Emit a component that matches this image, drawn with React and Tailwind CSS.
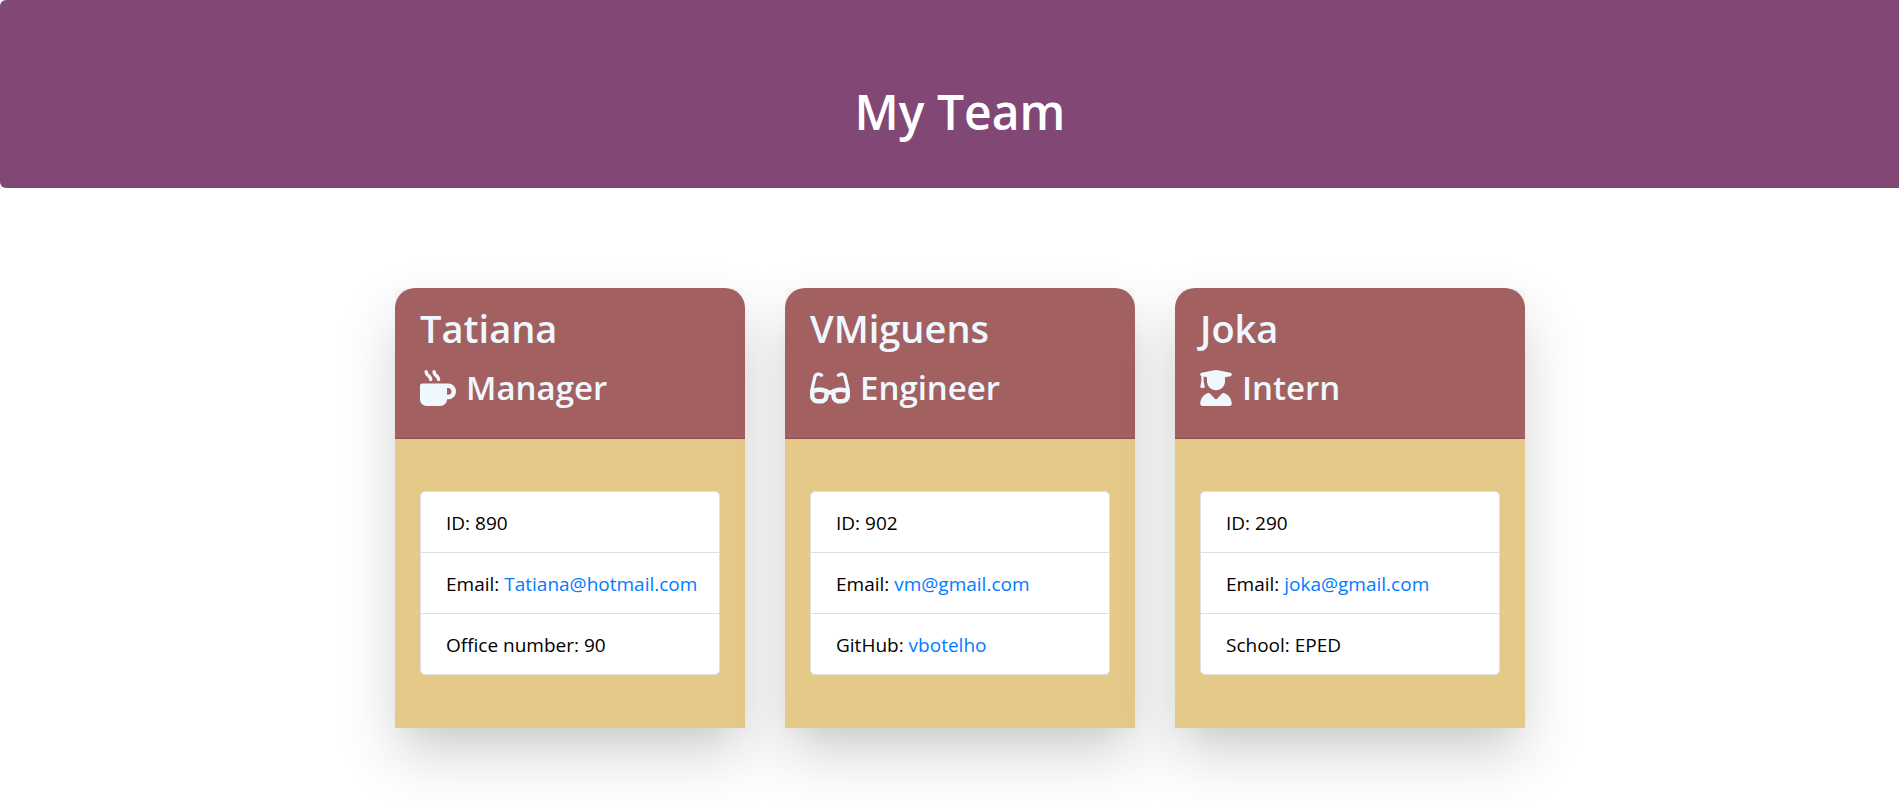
import { FaMugHot, FaGlasses, FaUserGraduate } from "react-icons/fa6";

const team = [
  {
    name: "Tatiana",
    role: "Manager",
    Icon: FaMugHot,
    iconSize: "w-[36px]",
    id: "890",
    email: "Tatiana@hotmail.com",
    label: "Office number",
    value: "90",
  },
  {
    name: "VMiguens",
    role: "Engineer",
    Icon: FaGlasses,
    iconSize: "w-[40px]",
    id: "902",
    email: "vm@gmail.com",
    label: "GitHub",
    value: "vbotelho",
    href: "https://github.com/vbotelho",
  },
  {
    name: "Joka",
    role: "Intern",
    Icon: FaUserGraduate,
    iconSize: "w-[32px]",
    id: "290",
    email: "joka@gmail.com",
    label: "School",
    value: "EPED",
  },
];

function Row({ label, children }) {
  return (
    <li className="pt-[16px] pr-[15px] pb-[14px] pl-[25px] leading-[30px]">
      {label}: {children}
    </li>
  );
}

function Card({ member }) {
  const { name, role, Icon, iconSize, id, email, label, value, href } = member;
  return (
    <article className="w-[350px] rounded-t-[5px] bg-[#f5f5f5] shadow-[0_28px_60px_rgba(0,0,0,0.16),0_20px_32px_-18px_rgba(0,0,0,0.09)]">
      <header className="rounded-t-[20px] border-b border-[#8f5254] bg-[#a36061] px-[25px] pt-[16px] pb-[29px] text-[#f0f8ff]">
        <h2 className="mb-[15px] text-[38px] leading-[48px] font-semibold">{name}</h2>
        <h3 className="flex items-center gap-[10px] text-[33px] leading-[42px] font-semibold">
          <Icon className={"h-[36px] shrink-0 " + iconSize} aria-hidden="true" />
          {role}
        </h3>
      </header>
      <div className="bg-[#e4c988] px-[25px] pt-[52px] pb-[53px]">
        <ul className="divide-y divide-[#dfdfdf] rounded-[5px] border border-[#dfdfdf] bg-white text-[19px] text-black">
          <Row label="ID">{id}</Row>
          <Row label="Email">
            <a className="text-[#007bff]" href={"mailto:" + email}>{email}</a>
          </Row>
          <Row label={label}>
            {href ? <a className="text-[#007bff]" href={href}>{value}</a> : value}
          </Row>
        </ul>
      </div>
    </article>
  );
}

export default function App() {
  return (
    <div className="min-h-screen overflow-hidden bg-white font-['Open_Sans','Noto_Sans',sans-serif]">
      <div className="-mr-[21px]">
        <header className="mb-[100px] rounded-[6px] bg-[#814775] pt-[82px] pb-[46px] text-center text-white">
          <h1 className="text-[48px] leading-[60px] font-semibold">My Team</h1>
        </header>
        <main className="flex flex-wrap justify-center gap-[40px] pb-[80px]">
          {team.map((member) => (
            <Card key={member.name} member={member} />
          ))}
        </main>
      </div>
    </div>
  );
}
